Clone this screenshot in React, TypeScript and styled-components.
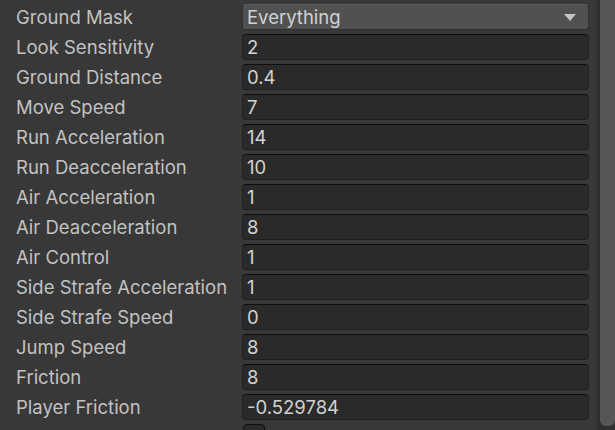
import React from "react";
import styled, { createGlobalStyle } from "styled-components";

const Global = createGlobalStyle`
  html, body { margin: 0; padding: 0; background: #383838; }
  body { font-family: Inter, "Noto Sans", sans-serif; }
`;

const Window = styled.div`
  width: 615px;
  height: 430px;
  overflow: hidden;
  display: flex;
  background: #383838;
`;

const Content = styled.div`
  width: 597px;
  padding-top: 2px;
  display: flex;
  flex-direction: column;
`;

const Row = styled.div`
  flex-shrink: 0;
  display: grid;
  grid-template-columns: 242px 347px;
  height: 30px;
  align-items: center;
`;

const Label = styled.div`
  padding-left: 16px;
  color: #c2c2c2;
  font-size: 18.5px;
  white-space: nowrap;
`;

const Field = styled.div`
  box-sizing: border-box;
  height: 26px;
  background: #2a2a2a;
  border: 1px solid #212121;
  border-top-color: #0e0e0e;
  border-radius: 4px;
  color: #d2d2d2;
  font-size: 18.5px;
  padding-left: 4px;
  display: flex;
  align-items: center;
`;

const Dropdown = styled(Field)`
  background: #515151;
  border-color: #303030;
  border-top-color: #5a5a5a;
  justify-content: space-between;
  padding-right: 12px;
`;

const Arrow = styled.span`
  width: 0;
  height: 0;
  border-left: 6px solid transparent;
  border-right: 6px solid transparent;
  border-top: 7px solid #c4c4c4;
`;

const Checkbox = styled.div`
  box-sizing: border-box;
  align-self: start;
  width: 22px;
  height: 22px;
  margin-left: 1px;
  margin-top: 2px;
  background: #2a2a2a;
  border: 1px solid #0e0e0e;
  border-radius: 4px;
`;

const ScrollTrack = styled.div`
  width: 18px;
  display: flex;
  background: #2f2f2f;
  padding-left: 3px;
  box-sizing: border-box;
`;

const Thumb = styled.div`
  flex: 1;
  height: 426px;
  background: #565656;
  border-radius: 0 0 6px 6px;
`;

const fields: [string, string][] = [
  ["Look Sensitivity", "2"],
  ["Ground Distance", "0.4"],
  ["Move Speed", "7"],
  ["Run Acceleration", "14"],
  ["Run Deacceleration", "10"],
  ["Air Acceleration", "1"],
  ["Air Deacceleration", "8"],
  ["Air Control", "1"],
  ["Side Strafe Acceleration", "1"],
  ["Side Strafe Speed", "0"],
  ["Jump Speed", "8"],
  ["Friction", "8"],
  ["Player Friction", "-0.529784"],
];

export default function App() {
  return (
    <Window>
      <Global />
      <Content>
        <Row>
          <Label>Ground Mask</Label>
          <Dropdown>
            <span>Everything</span>
            <Arrow />
          </Dropdown>
        </Row>
        {fields.map(([l, v]) => (
          <Row key={l}>
            <Label>{l}</Label>
            <Field>{v}</Field>
          </Row>
        ))}
        <Row>
          <Label>Is Grounded</Label>
          <Checkbox />
        </Row>
      </Content>
      <ScrollTrack>
        <Thumb />
      </ScrollTrack>
    </Window>
  );
}
